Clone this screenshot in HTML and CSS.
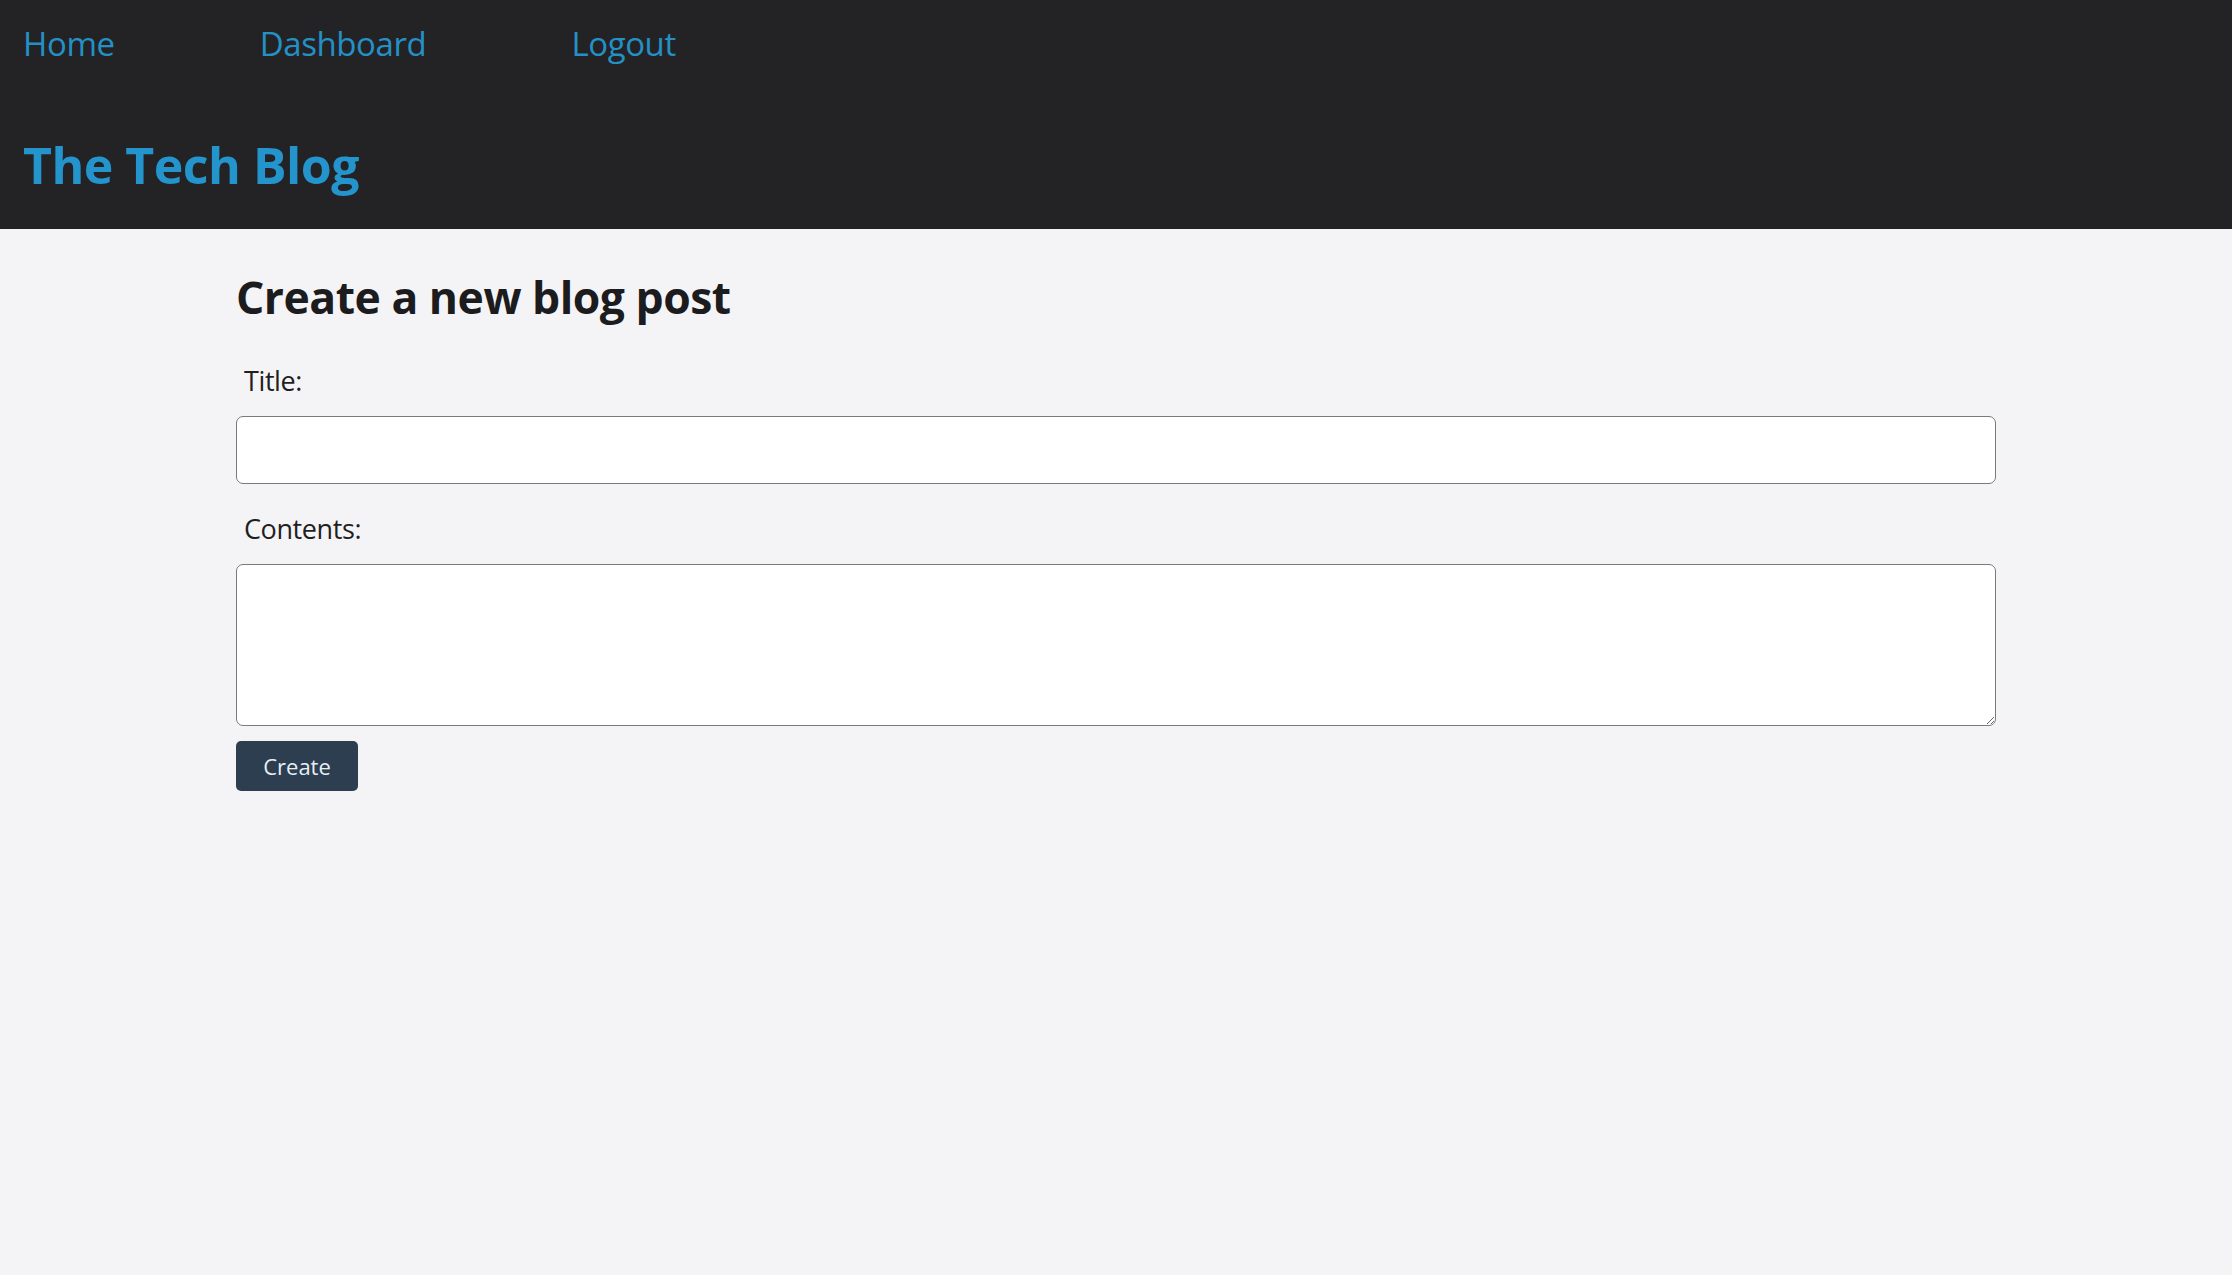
FILE: index.html
```html
<!DOCTYPE html>
<html lang="en">
<head>
<meta charset="utf-8">
<title>The Tech Blog</title>
<link rel="stylesheet" href="styles.css">
</head>
<body>
<header class="site-header">
  <nav class="nav">
    <a class="nav-link" href="#">Home</a>
    <a class="nav-link" href="#">Dashboard</a>
    <a class="nav-link" href="#">Logout</a>
  </nav>
  <h1 class="site-title">The Tech Blog</h1>
</header>
<main class="container">
  <h2 class="page-title">Create a new blog post</h2>
  <form class="post-form">
    <label class="form-label" for="title">Title:</label>
    <input class="form-input" id="title" type="text">
    <label class="form-label" for="contents">Contents:</label>
    <textarea class="form-textarea" id="contents"></textarea>
    <div><button class="btn" type="submit">Create</button></div>
  </form>
</main>
</body>
</html>
```

FILE: styles.css
```css
* { box-sizing: border-box; }
html, body { margin: 0; padding: 0; }
body {
  background: #f4f4f6;
  font-family: "Open Sans", "Noto Sans", sans-serif;
  color: #1e1e1e;
  min-height: 100vh;
}
.site-header {
  background: #232325;
  height: 229px;
  padding: 21px 0 0 23px;
}
.nav {
  display: flex;
  gap: 145px;
}
.nav-link {
  color: #2490c6;
  text-decoration: none;
  font-size: 33px;
  line-height: 46px;
  letter-spacing: -0.4px;
}
.site-title {
  margin: 68px 0 0 0;
  color: #2394cc;
  font-size: 50px;
  line-height: 60px;
  font-weight: 700;
  letter-spacing: -0.5px;
}
.container {
  width: 1760px;
  margin: 0 auto;
  padding-top: 38px;
}
.page-title {
  margin: 0 0 9px 0;
  font-size: 44.5px;
  line-height: 60px;
  font-weight: 700;
  letter-spacing: -0.5px;
  color: #1c1c1e;
}
.post-form {
  display: flex;
  flex-direction: column;
}
.form-label {
  margin: 25px 0 0 8px;
  font-size: 27px;
  line-height: 40px;
  letter-spacing: -0.4px;
  color: #1f1f1f;
}
.form-input {
  margin-top: 15px;
  height: 68px;
  border: 1.5px solid #7a7a7a;
  border-radius: 7px;
  background: #fff;
  font-size: 24px;
  padding: 0 12px;
}
.form-textarea {
  margin-top: 15px;
  height: 162px;
  border: 1.5px solid #7a7a7a;
  border-radius: 7px;
  background: #fff;
  font-size: 24px;
  padding: 10px 12px;
  resize: vertical;
  font-family: inherit;
}
.btn {
  margin-top: 15px;
  width: 122px;
  height: 50px;
  background: #2c3e50;
  color: #e6eef4;
  border: none;
  border-radius: 5px;
  font-family: inherit;
  font-size: 22px;
}
```
